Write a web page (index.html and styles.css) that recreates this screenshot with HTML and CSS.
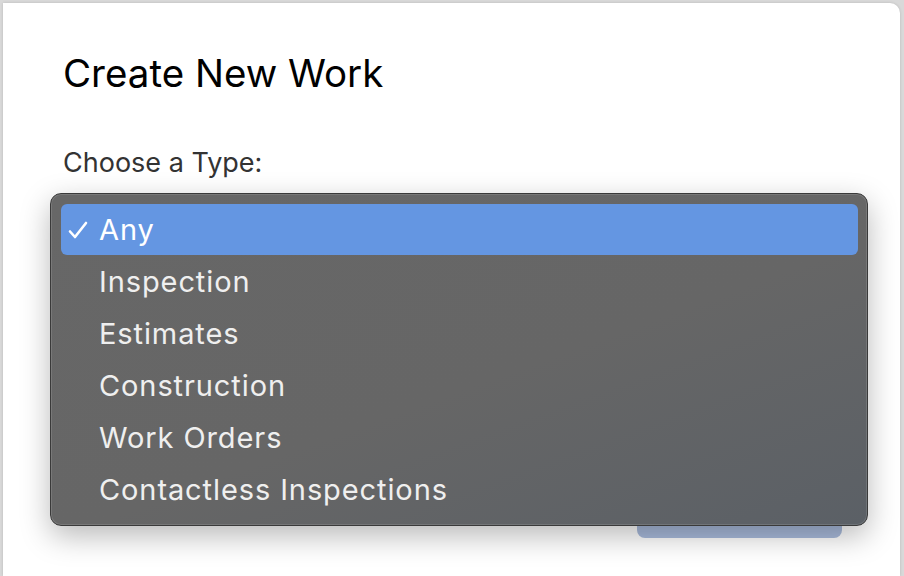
FILE: index.html
```html
<!DOCTYPE html>
<html lang="en">
<head>
    <meta charset="UTF-8">
    <title>Create New Work</title>
    <link rel="stylesheet" href="styles.css">
</head>
<body>

    <div class="modal">
        <h1>Create New Work</h1>

        <!-- Type picker -->
        <div class="field">
            <label class="label">Choose a Type:</label>
            <div class="select"></div>
        </div>

        <div class="footer">
            <button class="btn-create">Create</button>
        </div>

        <!-- Open popup menu -->
        <ul class="menu">
            <li class="item selected">
                <svg class="check" width="20" height="18" viewBox="0 0 20 18">
                    <path d="M2 10.5 L7 16 L18 2" fill="none" stroke="#fff" stroke-width="2.6" stroke-linecap="round" stroke-linejoin="round"/>
                </svg>
                Any
            </li>
            <li class="item">Inspection</li>
            <li class="item">Estimates</li>
            <li class="item">Construction</li>
            <li class="item">Work Orders</li>
            <li class="item">Contactless Inspections</li>
        </ul>
    </div>

</body>
</html>
```

FILE: styles.css
```css
html, body {
    margin: 0;
    height: 100%;
}
body {
    font-family: Inter, "Liberation Sans", Arial, sans-serif;
    background-color: #d9d9d9;
    padding: 3px 4px 0 3px;
    box-sizing: border-box;
    overflow: hidden;
}
.modal {
    position: relative;
    height: 100%;
    background-color: #ffffff;
    border-radius: 0 10px 0 0;
    padding: 48px 58px 0 60px;
    box-sizing: border-box;
    box-shadow: 0 0 3px rgba(0, 0, 0, 0.15);
}
h1 {
    margin: 0;
    font-size: 38.5px;
    font-weight: 400;
    color: #000000;
    line-height: 44px;
}
.field {
    margin-top: 52px;
}
.label {
    display: block;
    font-size: 27px;
    color: #333333;
    line-height: 32px;
}
.select {
    height: 44px;
    margin-top: 16px;
}
.footer {
    display: flex;
    justify-content: flex-end;
    margin-top: 259px;
}
.btn-create {
    width: 205px;
    height: 40px;
    border: none;
    border-radius: 8px;
    background-color: #a9bbdc;
    color: #ffffff;
    font-family: inherit;
    font-size: 20px;
}
.menu {
    position: absolute;
    left: 47px;
    top: 190px;
    width: 818px;
    height: 333px;
    box-sizing: border-box;
    margin: 0;
    padding: 10px 9px 10px 10px;
    list-style: none;
    background: linear-gradient(160deg, #676767 0%, #666666 55%, #5b6066 100%);
    border: 1px solid #3a3a3a;
    border-radius: 11px;
    box-shadow: inset 0 0 0 1px rgba(255, 255, 255, 0.12), 0 10px 30px rgba(0, 0, 0, 0.28);
}
.item {
    position: relative;
    height: 52px;
    line-height: 52px;
    padding-left: 38px;
    font-size: 29px;
    letter-spacing: 0.9px;
    color: #efefef;
    border-radius: 6px;
}
.item.selected {
    height: 51px;
    margin-bottom: 1px;
    line-height: 51px;
    background-color: #6496e2;
    color: #ffffff;
}
.check {
    position: absolute;
    left: 7px;
    top: 17px;
}
```
